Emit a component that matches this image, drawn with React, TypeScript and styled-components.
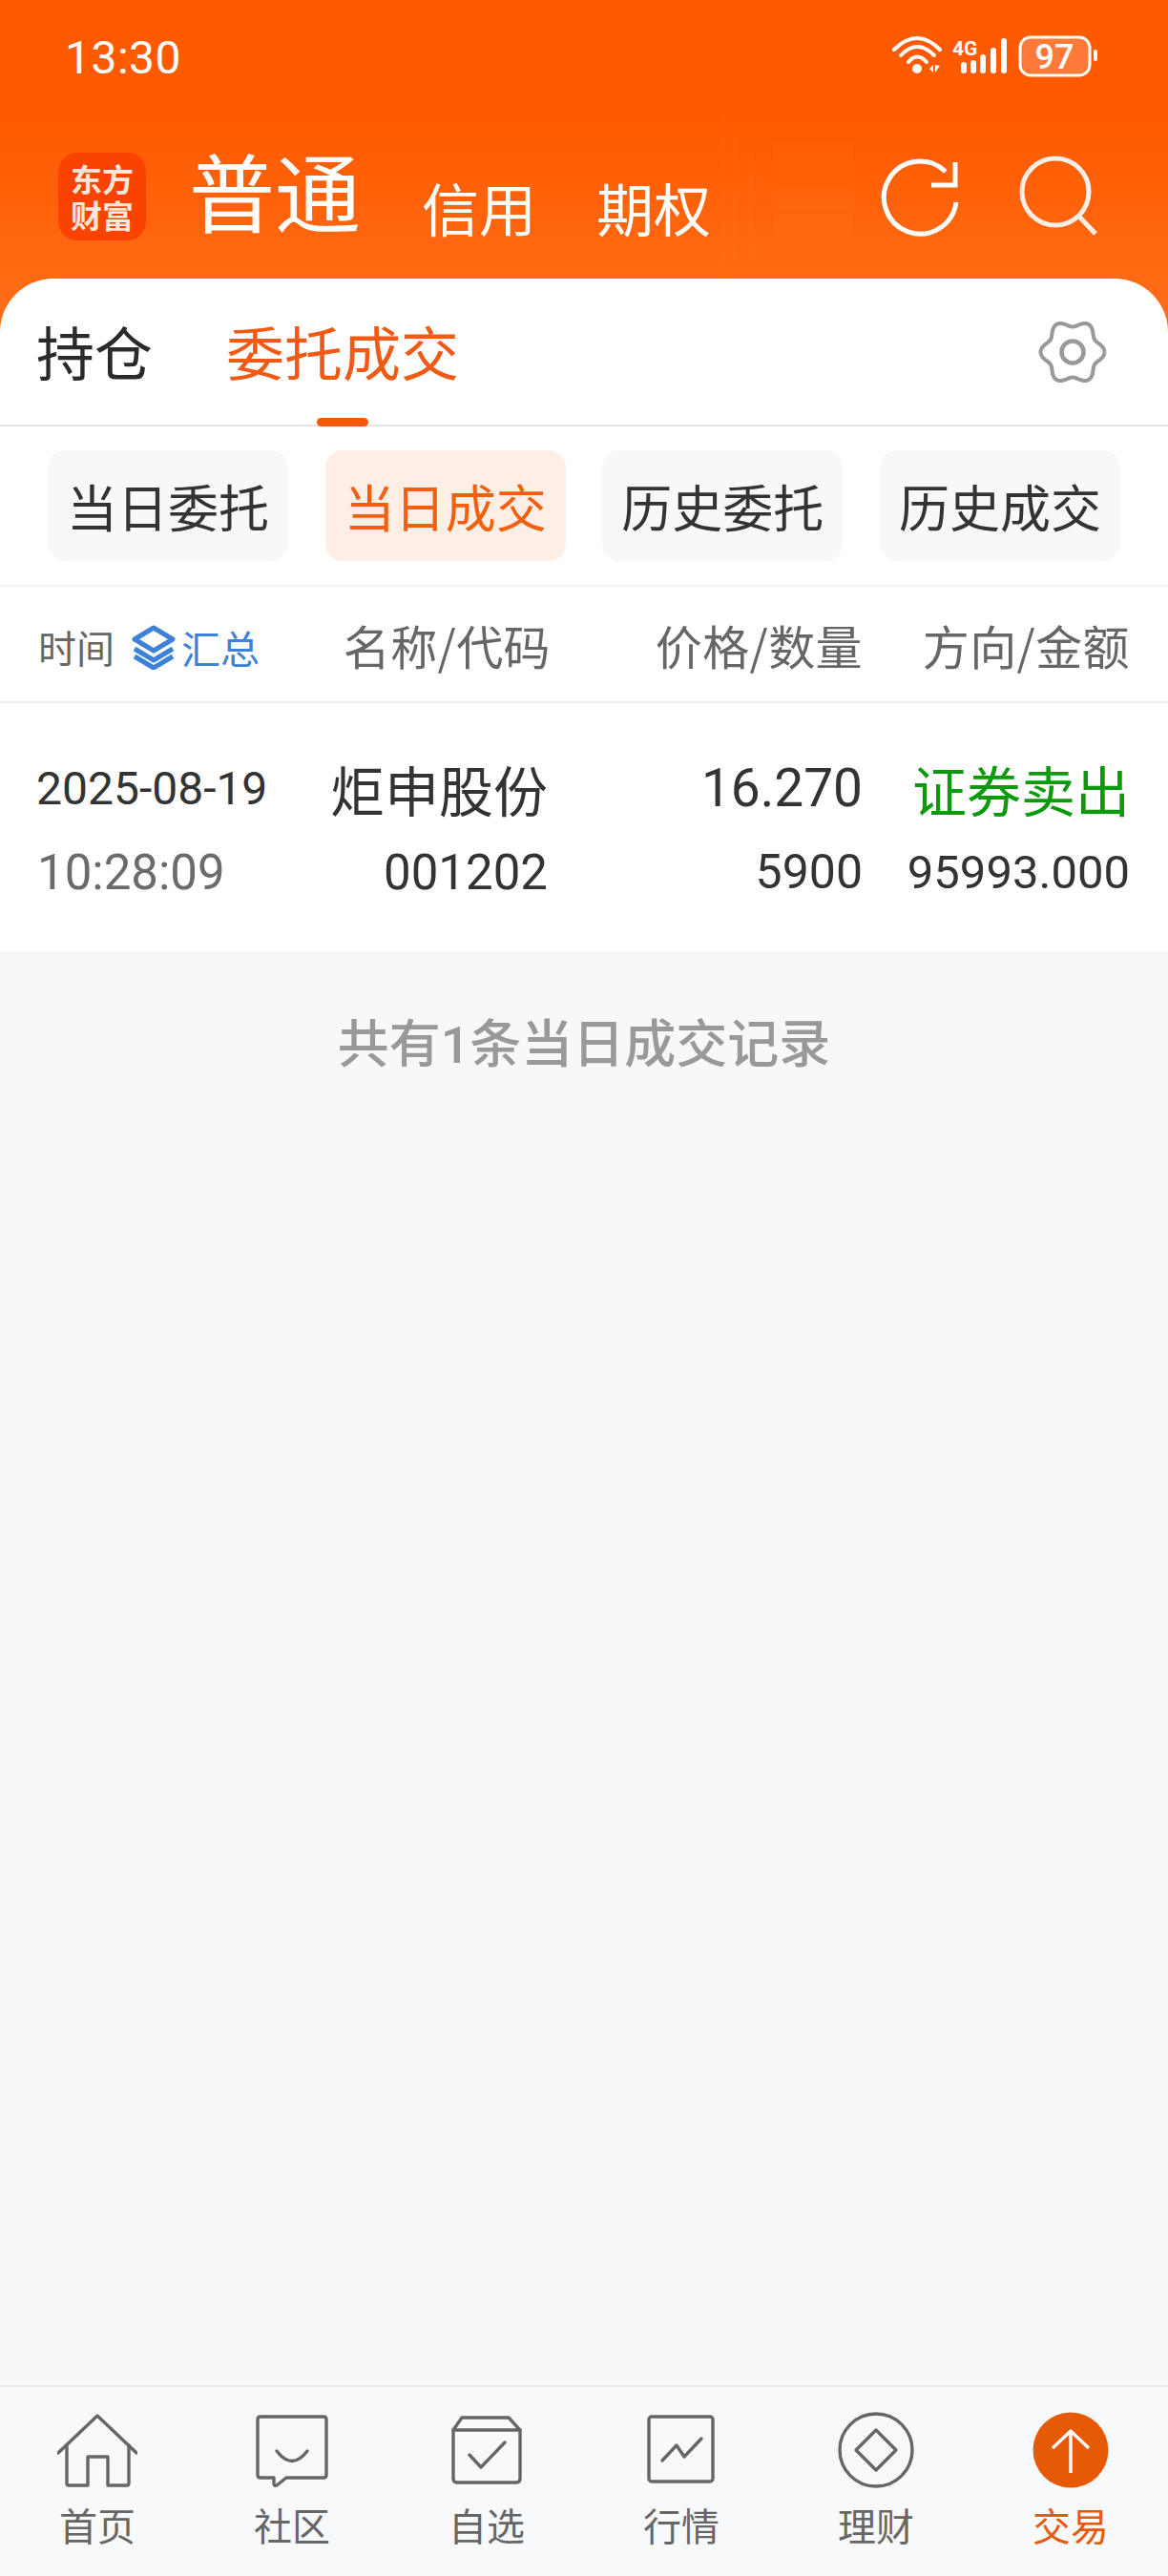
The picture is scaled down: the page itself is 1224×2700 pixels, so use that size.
import React from 'react'
import styled, { createGlobalStyle } from 'styled-components'

const GlobalStyle = createGlobalStyle`
  html, body {
    margin: 0;
    padding: 0;
    background: #f7f8fa;
    font-family: "Roboto", "Noto Sans CJK SC", sans-serif;
  }
  * { box-sizing: border-box; }
`

const Page = styled.div`
  width: 1224px;
  height: 2700px;
  display: flex;
  flex-direction: column;
  background: #f7f8fa;
  overflow: hidden;
`

const Header = styled.div`
  position: relative;
  height: 350px;
  flex: none;
  background: linear-gradient(180deg, #ff5a00 0%, #ff5a00 34%, #ff6f1a 100%);
  padding: 0 70px 0 61px;
`

const GhostMark = styled.svg`
  position: absolute;
  left: 740px;
  top: 120px;
  width: 160px;
  height: 172px;
  fill: #ff8a3a;
  opacity: 0.06;
`

const StatusBar = styled.div`
  position: relative;
  height: 124px;
  display: flex;
  align-items: center;
  justify-content: space-between;
  color: #fff;
  padding: 0 0 4px 7px;
`

const Clock = styled.span`
  font-size: 48px;
  letter-spacing: 0.5px;
  font-weight: 400;
`

const StatusIcons = styled.svg`
  width: 220px;
  height: 46px;
`

const NavRow = styled.div`
  position: relative;
  display: flex;
  align-items: flex-end;
  height: 130px;
  padding-bottom: 8px;
`

const Logo = styled.div`
  width: 92px;
  height: 92px;
  flex: none;
  border-radius: 20px;
  background: #fa4300;
  color: #ffe6d8;
  display: flex;
  align-items: center;
  justify-content: center;
  text-align: center;
  font-family: "Noto Sans CJK SC", sans-serif;
  font-size: 33px;
  line-height: 38px;
  font-weight: 700;
  margin-right: 45px;
  margin-bottom: -6px;
`

const AccountTab = styled.span<{ $active?: boolean }>`
  color: #fff;
  font-family: "Noto Sans CJK SC", sans-serif;
  font-size: ${p => (p.$active ? 90 : 60)}px;
  line-height: ${p => (p.$active ? 96 : 70)}px;
  margin-right: ${p => (p.$active ? 64 : 63)}px;
  margin-bottom: ${p => (p.$active ? 0 : -6)}px;
`

const NavIcons = styled.div`
  margin-left: auto;
  display: flex;
  gap: 58px;
  align-items: center;
  margin-bottom: -2px;
`

const NavIcon = styled.svg<{ $soft?: boolean }>`
  width: 88px;
  height: 88px;
  fill: none;
  stroke: ${p => (p.$soft ? '#fdeee5' : '#fff')};
  stroke-width: 5;
`

const Sheet = styled.div`
  position: relative;
  background: #fff;
  border-radius: 56px 56px 0 0;
  margin-top: -58px;
  flex: none;
`

const TabRow = styled.div`
  height: 155px;
  display: flex;
  align-items: center;
  padding: 0 64px 0 38px;
  border-bottom: 2px solid #e6e6e6;
  gap: 77px;
`

const TopTab = styled.div<{ $active?: boolean }>`
  position: relative;
  height: 153px;
  line-height: 152px;
  font-size: 61px;
  font-family: "Noto Sans CJK SC", sans-serif;
  color: ${p => (p.$active ? '#f05a14' : '#2a2a2a')};
  ${p =>
    p.$active &&
    `&::after {
      content: '';
      position: absolute;
      left: 50%;
      bottom: -2px;
      width: 54px;
      height: 9px;
      margin-left: -27px;
      background: #f55a0c;
      border-radius: 5px;
    }`}
`

const Gear = styled.svg`
  margin-left: auto;
  width: 72px;
  height: 72px;
  fill: none;
  stroke: #999;
  stroke-width: 4;
`

const FilterRow = styled.div`
  height: 168px;
  display: flex;
  align-items: center;
  justify-content: space-between;
  padding: 0 50px;
  border-bottom: 2px solid #f4f4f4;
`

const Filter = styled.div<{ $active?: boolean }>`
  width: 252px;
  height: 116px;
  border-radius: 18px;
  display: flex;
  align-items: center;
  justify-content: center;
  font-size: 53px;
  font-family: "Noto Sans CJK SC", sans-serif;
  background: ${p => (p.$active ? '#ffeee5' : '#f7f8fa')};
  color: ${p => (p.$active ? '#f2600f' : '#333')};
`

const ColumnRow = styled.div`
  height: 122px;
  display: grid;
  grid-template-columns: 300px 237px 327px 280px;
  align-items: center;
  padding: 0 40px;
  border-bottom: 2px solid #eeeeee;
  color: #666;
  font-size: 49px;
  letter-spacing: 0.4px;
  font-family: "Noto Sans CJK SC", sans-serif;
`

const TimeHead = styled.div`
  display: flex;
  align-items: center;
  font-size: 40px;
  letter-spacing: 0;
  padding-top: 6px;
`

const Summary = styled.span`
  display: inline-flex;
  align-items: center;
  gap: 5px;
  margin-left: 17px;
  font-size: 41px;
  color: #3e82d8;
`

const RightCell = styled.div`
  text-align: right;
`

const Record = styled.div`
  height: 260px;
  background: #fff;
  display: grid;
  grid-template-columns: 302px 234px 330px 280px;
  grid-template-rows: 88px 88px;
  align-content: start;
  align-items: center;
  padding: 45px 40px 0 38px;
`

const DateText = styled.div`
  font-size: 48px;
  color: #333;
`

const TimeText = styled.div`
  margin-left: 1px;
  font-size: 51px;
  color: #6b6b6b;
`

const NameText = styled(RightCell)`
  font-family: "Noto Sans CJK SC", sans-serif;
  font-size: 57px;
  color: #333;
`

const Num = styled(RightCell)<{ $size: number }>`
  font-size: ${p => p.$size}px;
  color: #333;
`

const Side = styled(RightCell)`
  font-family: "Noto Sans CJK SC", sans-serif;
  font-size: 57px;
  color: #0a9a0a;
`

const Footnote = styled.div`
  flex: 1;
  text-align: center;
  padding-top: 63px;
  font-family: "Roboto", "Noto Sans CJK SC", sans-serif;
  font-size: 54px;
  line-height: 72px;
  font-weight: 500;
  color: #999;
`

const TabBar = styled.div`
  height: 200px;
  flex: none;
  border-top: 2px solid #e6e7ea;
  background: #f8f9fb;
  display: grid;
  grid-template-columns: repeat(6, 1fr);
`

const TabItem = styled.div<{ $active?: boolean }>`
  display: flex;
  flex-direction: column;
  align-items: center;
  padding-top: 26px;
  font-family: "Noto Sans CJK SC", sans-serif;
  font-size: 40px;
  line-height: 48px;
  color: ${p => (p.$active ? '#e45a0e' : '#666')};
`

const TabIcon = styled.svg`
  width: 84px;
  height: 84px;
  margin-bottom: 10px;
  fill: none;
  stroke: #666;
  stroke-width: 3.4;
  stroke-linejoin: round;
  stroke-linecap: round;
`

// wavy six-lobed outline of the settings cog
const gearPath = Array.from({ length: 121 }, (_, i) => {
  const a = (i / 120) * Math.PI * 2
  const r = 30 + 3.5 * Math.cos(6 * a)
  return `${i === 0 ? 'M' : 'L'}${(36 + r * Math.cos(a)).toFixed(2)} ${(36 + r * Math.sin(a)).toFixed(2)}`
}).join(' ')

const tabs = [
  {
    label: '首页',
    icon: (
      <>
        <path d="M1 43 L42 4 L83 43" />
        <path d="M10 35 V75 Q10 77 12 77 H32 V47 H53 V77 H73 Q75 77 75 75 V35" />
      </>
    ),
  },
  {
    label: '社区',
    icon: (
      <>
        <path d="M9 5 H75 Q78 5 78 8 V66 Q78 69 75 69 H36 L26 77 Q23 78 23 75 V69 H9 Q6 69 6 66 V8 Q6 5 9 5 Z" />
        <path d="M26 41 Q42 62 58 41" />
      </>
    ),
  },
  {
    label: '自选',
    icon: (
      <>
        <path d="M7 19 L16 6 H65 L77 19 V70 Q77 74 73 74 H11 Q7 74 7 70 Z" />
        <path d="M7 19 H77" />
        <path d="M24 45 L36 58 L61 32" />
      </>
    ),
  },
  {
    label: '行情',
    icon: (
      <>
        <rect x="8" y="5" width="67" height="68" rx="3" />
        <path d="M22 51 L37 35 L45 47 L63 28" />
      </>
    ),
  },
  {
    label: '理财',
    icon: (
      <>
        <circle cx="42" cy="40" r="38" />
        <path d="M42 19 L63 40 L42 61 L21 40 Z" />
      </>
    ),
  },
]

const App = () => {
  return (
    <Page>
      <GlobalStyle />
      <Header>
        <GhostMark viewBox="0 0 160 172">
          <rect x="16" y="0" width="3" height="172" />
          <rect x="28" y="20" width="5" height="130" />
          <rect x="44" y="40" width="6" height="110" />
          <rect x="70" y="30" width="84" height="32" />
          <rect x="70" y="76" width="84" height="24" />
          <rect x="70" y="104" width="84" height="22" />
        </GhostMark>
        <StatusBar>
          <Clock>13:30</Clock>
          <StatusIcons viewBox="0 0 220 46">
            <g fill="none" stroke="#fff" strokeWidth="4" strokeLinecap="round">
              <path d="M3 15 Q27 -9 51 15" />
              <path d="M10 21 Q27 3 45 21" />
              <path d="M18 28 Q27 17 37 28" />
            </g>
            <circle cx="27" cy="35" r="5" fill="#fff" />
            <path d="M40 35 L44 31 V39 Z M46 31 L51 32 L46 39 Z" fill="#fff" />
            <text x="64" y="21" fontSize="21" fontWeight="700" fill="#fff" fontFamily="Roboto">4G</text>
            <g fill="#fff">
              <rect x="73" y="28" width="6" height="12" rx="3" />
              <rect x="83" y="26" width="6" height="14" rx="3" />
              <rect x="93" y="20" width="6" height="20" rx="3" />
              <rect x="104" y="13" width="6" height="27" rx="3" />
              <rect x="115" y="3" width="6" height="37" rx="3" />
            </g>
            <rect x="135" y="2" width="73" height="40" rx="11" fill="#ff7a38" stroke="#fff" strokeWidth="3" />
            <text x="171" y="35" textAnchor="middle" fontSize="36" fontWeight="500" fill="#fff" fontFamily="Roboto">97</text>
            <rect x="212" y="15" width="4" height="12" rx="2" fill="#fff" />
          </StatusIcons>
        </StatusBar>
        <NavRow>
          <Logo>东方<br />财富</Logo>
          <AccountTab $active>普通</AccountTab>
          <AccountTab>信用</AccountTab>
          <AccountTab>期权</AccountTab>
          <NavIcons>
            <NavIcon viewBox="0 0 88 88">
              <path d="M82 52 A38 38 0 1 1 71 20" />
              <path d="M81 10 V34 H56" />
            </NavIcon>
            <NavIcon viewBox="0 0 88 88" $soft>
              <circle cx="40" cy="41" r="35" />
              <path d="M65 67 L82 85" />
            </NavIcon>
          </NavIcons>
        </NavRow>
      </Header>
      <Sheet>
        <TabRow>
          <TopTab>持仓</TopTab>
          <TopTab $active>委托成交</TopTab>
          <Gear viewBox="0 0 72 72">
            <path d={gearPath} />
            <circle cx="36" cy="36" r="11.5" strokeWidth="4.5" />
          </Gear>
        </TabRow>
        <FilterRow>
          <Filter>当日委托</Filter>
          <Filter $active>当日成交</Filter>
          <Filter>历史委托</Filter>
          <Filter>历史成交</Filter>
        </FilterRow>
        <ColumnRow>
          <TimeHead>
            时间
            <Summary>
              <svg width="48" height="48" viewBox="0 0 48 48" fill="none" stroke="#3e82d8" strokeWidth="5" strokeLinejoin="round">
                <path d="M24 4 L44 16 L24 28 L4 16 Z" />
                <path d="M4 26 L24 38 L44 26" />
                <path d="M4 34 L24 46 L44 34" />
              </svg>
              汇总
            </Summary>
          </TimeHead>
          <RightCell>名称/代码</RightCell>
          <RightCell>价格/数量</RightCell>
          <RightCell>方向/金额</RightCell>
        </ColumnRow>
        <Record>
          <DateText>2025-08-19</DateText>
          <NameText>炬申股份</NameText>
          <Num $size={55}>16.270</Num>
          <Side>证券卖出</Side>
          <TimeText>10:28:09</TimeText>
          <Num $size={51}>001202</Num>
          <Num $size={50}>5900</Num>
          <Num $size={49}>95993.000</Num>
        </Record>
      </Sheet>
      <Footnote>共有1条当日成交记录</Footnote>
      <TabBar>
        {tabs.map(tab => (
          <TabItem key={tab.label}>
            <TabIcon viewBox="0 0 84 84">{tab.icon}</TabIcon>
            {tab.label}
          </TabItem>
        ))}
        <TabItem $active>
          <TabIcon viewBox="0 0 84 84">
            <circle cx="42" cy="40" r="39.5" fill="#e65a06" stroke="none" />
            <path d="M42 64 V20 M23 38 L42 20 L61 38" stroke="#fff" strokeLinecap="butt" />
          </TabIcon>
          交易
        </TabItem>
      </TabBar>
    </Page>
  )
}

export default App
